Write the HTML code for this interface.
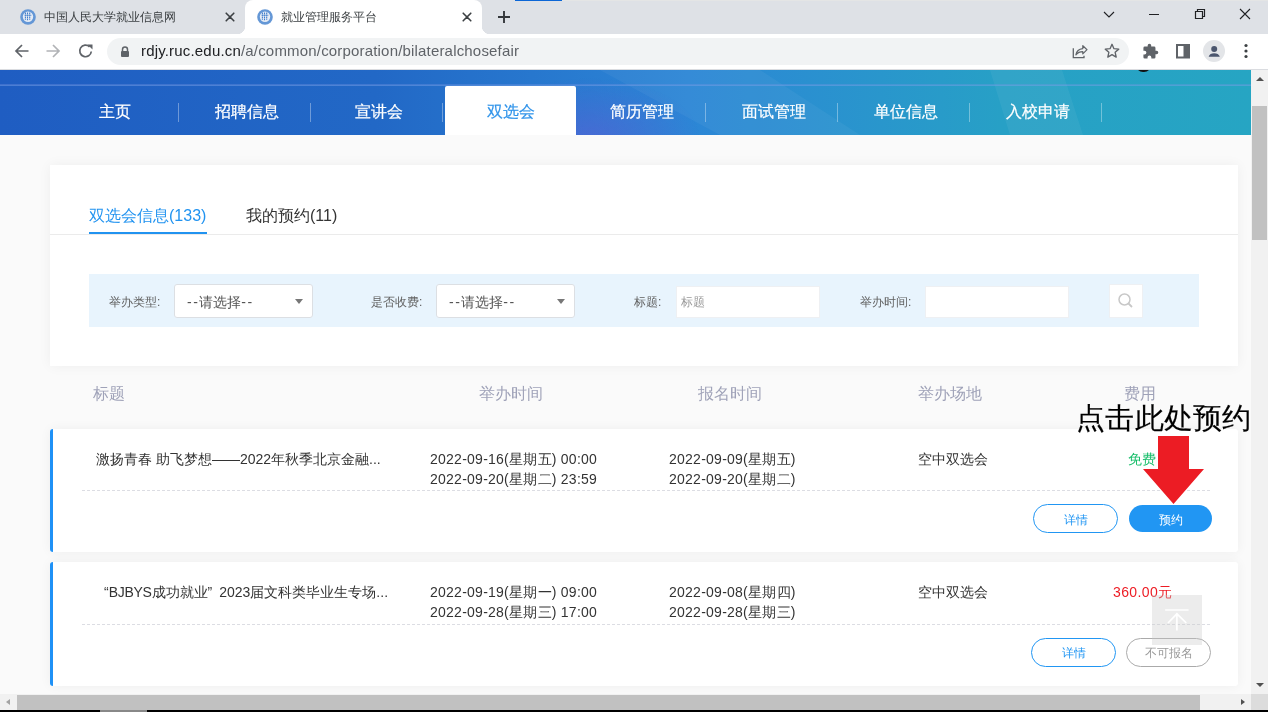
<!DOCTYPE html>
<html><head><meta charset="utf-8">
<style>
*{margin:0;padding:0;box-sizing:border-box}
html,body{width:1268px;height:712px;overflow:hidden;background:#fff;font-family:"Liberation Sans",sans-serif}
.a{position:absolute;white-space:nowrap}
#tabs{position:absolute;left:0;top:0;width:1268px;height:34px;background:#dee1e6}
#tb{position:absolute;left:0;top:34px;width:1268px;height:36px;background:#fff;border-bottom:1px solid #dadce0}
#omni{position:absolute;left:107px;top:38px;width:1022px;height:27px;border-radius:13.5px;background:#f1f3f4}
#page{position:absolute;left:0;top:70px;width:1251px;height:624px;background:#fafafa;overflow:hidden}
#hdr{position:absolute;left:0;top:0;width:1251px;height:65px;background:linear-gradient(90deg,#1f5dc2 0%,#2268c6 30%,#2c86d6 55%,#27a0c6 80%,#26a5c3 100%)}
.nav{position:absolute;top:16px;height:49px;width:132px;color:#fff;font-size:16px;line-height:52px;-webkit-text-stroke:.2px currentColor;text-align:center}
.sep{position:absolute;top:33px;width:1px;height:19px;background:rgba(255,255,255,.35)}
.card{position:absolute;background:#fff;box-shadow:0 0 12px rgba(0,0,0,.05)}
.lbl{position:absolute;font-size:12px;color:#606060;line-height:14px}
.sel{position:absolute;height:34px;background:#fff;border:1px solid #dcdfe3;border-radius:3px;font-size:14px;color:#555;line-height:34px;padding-left:12px}
.inp{position:absolute;height:32px;background:#fff;border:1px solid #eef0f3;font-size:12px;color:#999;line-height:30px;padding-left:4px}
.th{position:absolute;top:314px;font-size:16px;color:#9fa2b8;line-height:20px}
.row{position:absolute;left:50px;width:1188px;height:124px;background:#fff;border-left:3px solid #1f91f6;border-radius:3px;box-shadow:0 0 12px rgba(0,0,0,.05)}
.t14{position:absolute;font-size:14px;color:#333;line-height:20px}
.dash{position:absolute;left:29px;width:1130px;height:1px;background:repeating-linear-gradient(90deg,#dcdde3 0 3px,transparent 3px 5px)}
.btn{position:absolute;height:29px;width:85px;border-radius:15px;font-size:12px;text-align:center;line-height:29px;padding-top:1px}
.t14,.th,.nav,.lbl,.sel,.inp,.btn,div.a{will-change:transform}
</style></head><body>
<!-- Tab strip -->
<div id="tabs">
  <div class="a" style="left:515px;top:0;width:47px;height:1px;background:#0b66d6"></div><div class="a" style="left:562px;top:0;width:706px;height:1px;background:#e4e5e5"></div>
  <!-- active tab -->
  <div class="a" style="left:245px;top:0;width:237px;height:34px;background:#fff;border-radius:8px 8px 0 0"></div>
  <div class="a" style="left:237px;top:26px;width:8px;height:8px;background:radial-gradient(circle at 0 0,#dee1e6 8px,#fff 8.5px)"></div>
  <div class="a" style="left:482px;top:26px;width:8px;height:8px;background:radial-gradient(circle at 100% 0,#dee1e6 8px,#fff 8.5px)"></div>
  <!-- favicons -->
  <svg class="a" style="left:20px;top:9px" width="16" height="16" viewBox="0 0 16 16"><circle cx="8" cy="8" r="7.8" fill="#6497d6"/><circle cx="8" cy="7.8" r="5.2" fill="#e6ecf5"/><path d="M5.4 3.6v7.4M7.5 3.4v7.8M9.7 3.6v7.4" stroke="#3f7ccb" stroke-width="1.1" stroke-dasharray="1.6 .6"/><path d="M4.6 6.3h6.8" stroke="#5b8fd2" stroke-width=".8"/></svg>
  <div class="a" style="left:44px;top:9px;font-size:12px;color:#3c4043;line-height:16px">中国人民大学就业信息网</div>
  <svg class="a" style="left:224px;top:11px" width="12" height="12" viewBox="0 0 12 12"><path d="M2.2 2.2L9.8 9.8M9.8 2.2L2.2 9.8" stroke="#3c4043" stroke-width="1.6" stroke-linecap="round"/></svg>
  <svg class="a" style="left:257px;top:9px" width="16" height="16" viewBox="0 0 16 16"><circle cx="8" cy="8" r="7.8" fill="#6497d6"/><circle cx="8" cy="7.8" r="5.2" fill="#e6ecf5"/><path d="M5.4 3.6v7.4M7.5 3.4v7.8M9.7 3.6v7.4" stroke="#3f7ccb" stroke-width="1.1" stroke-dasharray="1.6 .6"/><path d="M4.6 6.3h6.8" stroke="#5b8fd2" stroke-width=".8"/></svg>
  <div class="a" style="left:281px;top:9px;font-size:12px;color:#3c4043;line-height:16px">就业管理服务平台</div>
  <svg class="a" style="left:461px;top:11px" width="12" height="12" viewBox="0 0 12 12"><path d="M2.2 2.2L9.8 9.8M9.8 2.2L2.2 9.8" stroke="#3c4043" stroke-width="1.6" stroke-linecap="round"/></svg>
  <svg class="a" style="left:496px;top:9px" width="16" height="16" viewBox="0 0 16 16"><path d="M8 2v12M2 8h12" stroke="#35383c" stroke-width="1.9"/></svg>
  <!-- window controls -->
  <svg class="a" style="left:1101px;top:6px" width="16" height="16" viewBox="0 0 16 16"><path d="M3 6l5 5 5-5" fill="none" stroke="#202124" stroke-width="1.1"/></svg>
  <svg class="a" style="left:1146px;top:7px" width="16" height="16" viewBox="0 0 16 16"><path d="M3 7.5h10" stroke="#202124" stroke-width="1"/></svg>
  <svg class="a" style="left:1192px;top:6px" width="16" height="16" viewBox="0 0 16 16"><path d="M3.5 5.5h7v7h-7z M5.5 5.5v-2h7v7h-2" fill="none" stroke="#202124" stroke-width="1.2"/></svg>
  <svg class="a" style="left:1237px;top:6px" width="16" height="16" viewBox="0 0 16 16"><path d="M3 3l10 10M13 3L3 13" stroke="#202124" stroke-width="1.1"/></svg>
</div>
<!-- Toolbar -->
<div id="tb">
  <svg class="a" style="left:12px;top:7px" width="20" height="20" viewBox="0 0 20 20"><path d="M16.5 10H4M10 4l-6 6 6 6" fill="none" stroke="#5f6368" stroke-width="1.7"/></svg>
  <svg class="a" style="left:43px;top:7px" width="20" height="20" viewBox="0 0 20 20"><path d="M3.5 10H16M10 4l6 6-6 6" fill="none" stroke="#b1b3b6" stroke-width="1.7"/></svg>
  <svg class="a" style="left:76px;top:7px" width="20" height="20" viewBox="0 0 20 20"><path d="M15.3 10.5A5.8 5.8 0 1 1 13.6 5.8" fill="none" stroke="#5f6368" stroke-width="1.7"/><path d="M11.5 3.5h5v5z" fill="#5f6368"/></svg>
</div>
<div id="omni"></div>
<svg class="a" style="left:119px;top:45px" width="12" height="14" viewBox="0 0 12 14"><path d="M3.5 6.5V4.5a2.5 2.5 0 0 1 5 0V6.5" fill="none" stroke="#5f6368" stroke-width="1.5"/><rect x="2" y="6" width="8" height="6" rx="1" fill="#5f6368"/></svg>
<div class="a" style="left:141px;top:42px;font-size:15px;line-height:18px;color:#202124;letter-spacing:.18px">rdjy.ruc.edu.cn<span style="color:#5f6368">/a/common/corporation/bilateralchosefair</span></div>
<!-- right toolbar icons -->
<svg class="a" style="left:1070px;top:43px" width="20" height="18" viewBox="0 0 20 18"><path d="M3.3 5.2V14.7H14V12.8" fill="none" stroke="#5f6368" stroke-width="1.3"/><path d="M5.9 11.8C6.5 8 9 6 12.8 5.6V2.6L17 6.7L12.8 10.9V8.6C9.5 8.6 7.5 9.8 5.9 11.8Z" fill="none" stroke="#5f6368" stroke-width="1.2" stroke-linejoin="round"/></svg>
<svg class="a" style="left:1103px;top:42px" width="18" height="18" viewBox="0 0 24 24"><path d="M12 3l2.6 5.9 6.4.6-4.8 4.3 1.4 6.3L12 16.8 6.4 20.1l1.4-6.3L3 9.5l6.4-.6z" fill="none" stroke="#5f6368" stroke-width="1.8" stroke-linejoin="round"/></svg>
<svg class="a" style="left:1142px;top:43px" width="17" height="17" viewBox="0 0 24 24"><path d="M20.5 11H19V7a2 2 0 0 0-2-2h-4V3.5a2.5 2.5 0 0 0-5 0V5H4a2 2 0 0 0-2 2v3.8h1.5a2.7 2.7 0 0 1 0 5.4H2V20a2 2 0 0 0 2 2h3.8v-1.5a2.7 2.7 0 0 1 5.4 0V22H17a2 2 0 0 0 2-2v-4h1.5a2.5 2.5 0 0 0 0-5z" fill="#5f6368"/></svg>
<svg class="a" style="left:1175px;top:43px" width="16" height="16" viewBox="0 0 16 16"><rect x="2" y="2" width="12" height="12.5" fill="none" stroke="#5f6368" stroke-width="2"/><rect x="8.5" y="2" width="5.5" height="12.5" fill="#5f6368"/></svg>
<svg class="a" style="left:1203px;top:40px" width="22" height="22" viewBox="0 0 22 22"><circle cx="11" cy="11" r="11" fill="#e3e5e8"/><circle cx="11.2" cy="9" r="3" fill="#4b566e"/><path d="M5.6 16.8c.6-2.6 3-3.6 5.6-3.6s5 1 5.6 3.6z" fill="#4b566e"/></svg>
<svg class="a" style="left:1238px;top:43px" width="16" height="16" viewBox="0 0 16 16"><circle cx="8" cy="2.5" r="1.6" fill="#3c4043"/><circle cx="8" cy="8" r="1.6" fill="#3c4043"/><circle cx="8" cy="13.5" r="1.6" fill="#3c4043"/></svg>

<!-- PAGE -->
<div id="page">
  <div id="hdr">
    <div class="a" style="left:0;top:0;width:1251px;height:65px;background:radial-gradient(ellipse 110px 60px at 590px 68px,rgba(100,90,215,.5),rgba(100,90,215,0))"></div>
    <div class="a" style="left:0;top:0;width:1251px;height:65px;background:rgba(255,255,255,.045);clip-path:polygon(600px 0,760px 0,860px 65px,720px 65px)"></div>
    <div class="a" style="left:0;top:0;width:1251px;height:65px;background:rgba(255,255,255,.05);clip-path:polygon(990px 0,1062px 0,1083px 65px,1010px 65px)"></div>
    <div class="a" style="left:0;top:14px;width:1251px;height:1px;background:rgba(120,150,225,.35)"></div><div class="a" style="left:0;top:15px;width:1251px;height:1px;background:rgba(120,160,230,.5)"></div>
    <div class="a" style="left:1136px;top:-5px;width:15px;height:7px;border-radius:0 0 8px 8px;background:#111"></div>
    <div class="nav" style="left:49px">主页</div><div class="sep" style="left:178px"></div>
    <div class="nav" style="left:181px">招聘信息</div><div class="sep" style="left:310px"></div>
    <div class="nav" style="left:313px">宣讲会</div><div class="sep" style="left:442px"></div>
    <div class="nav" style="left:445px;width:131px;background:#fff;color:#2f93ea;border-radius:2px 2px 0 0">双选会</div>
    <div class="nav" style="left:576px">简历管理</div><div class="sep" style="left:705px"></div>
    <div class="nav" style="left:708px">面试管理</div><div class="sep" style="left:837px"></div>
    <div class="nav" style="left:840px">单位信息</div><div class="sep" style="left:969px"></div>
    <div class="nav" style="left:972px">入校申请</div><div class="sep" style="left:1101px"></div>
  </div>

  <!-- filter card -->
  <div class="card" style="left:50px;top:95px;width:1188px;height:201px">
    <div class="a" style="left:39px;top:40px;font-size:16px;line-height:22px;color:#2193f0">双选会信息(133)</div>
    <div class="a" style="left:39px;top:67px;width:118px;height:2px;background:#2193f0"></div>
    <div class="a" style="left:196px;top:40px;font-size:16px;line-height:22px;color:#333">我的预约(11)</div>
    <div class="a" style="left:0;top:69px;width:1188px;height:1px;background:#ebebeb"></div>
    <div class="a" style="left:39px;top:109px;width:1110px;height:53px;background:#e8f4fd">
      <div class="lbl" style="left:20px;top:21px">举办类型:</div>
      <div class="sel" style="left:85px;top:10px;width:139px"><span style="letter-spacing:1.5px">--</span>请选择<span style="letter-spacing:1.5px">--</span><span class="a" style="left:120px;top:14px;width:0;height:0;border-left:4.5px solid transparent;border-right:4.5px solid transparent;border-top:5px solid #777"></span></div>
      <div class="lbl" style="left:282px;top:21px">是否收费:</div>
      <div class="sel" style="left:347px;top:10px;width:139px"><span style="letter-spacing:1.5px">--</span>请选择<span style="letter-spacing:1.5px">--</span><span class="a" style="left:120px;top:14px;width:0;height:0;border-left:4.5px solid transparent;border-right:4.5px solid transparent;border-top:5px solid #777"></span></div>
      <div class="lbl" style="left:545px;top:21px">标题:</div>
      <div class="inp" style="left:587px;top:12px;width:144px">标题</div>
      <div class="lbl" style="left:771px;top:21px">举办时间:</div>
      <div class="inp" style="left:836px;top:12px;width:144px"></div>
      <div class="a" style="left:1020px;top:10px;width:34px;height:34px;background:#fff;border:1px solid #eef0f3">
        <svg class="a" style="left:7px;top:7px" width="18" height="18" viewBox="0 0 18 18"><circle cx="7.5" cy="7.5" r="5.5" fill="none" stroke="#c8c8c8" stroke-width="1.5"/><path d="M11.5 11.5l3.5 3.5" stroke="#c8c8c8" stroke-width="1.8"/></svg>
      </div>
    </div>
  </div>

  <!-- table header -->
  <div class="th" style="left:93px">标题</div>
  <div class="th" style="left:479px">举办时间</div>
  <div class="th" style="left:698px">报名时间</div>
  <div class="th" style="left:918px">举办场地</div>
  <div class="th" style="left:1124px">费用</div>

  <!-- row 1 -->
  <div class="row" style="top:359px;height:123px">
    <div class="t14" style="left:43px;top:20px">激扬青春 助飞梦想——2022年秋季北京金融...</div>
    <div class="t14" style="letter-spacing:.25px;left:377px;top:20px">2022-09-16(星期五) 00:00<br>2022-09-20(星期二) 23:59</div>
    <div class="t14" style="letter-spacing:.25px;left:616px;top:20px">2022-09-09(星期五)<br>2022-09-20(星期二)</div>
    <div class="t14" style="left:865px;top:20px">空中双选会</div>
    <div class="t14" style="left:1075px;top:20px;color:#19be6b">免费</div>
    <div class="dash" style="top:61px"></div>
    <div class="btn" style="left:980px;top:75px;border:1px solid #2196f3;color:#2196f3">详情</div>
    <div class="btn" style="left:1076px;top:76px;width:83px;height:27px;line-height:28px;background:#2196f3;color:#fff">预约</div>
  </div>

  <!-- row 2 -->
  <div class="row" style="top:492px">
    <div class="t14" style="left:51px;top:20px">“<span style="letter-spacing:-.3px">BJBYS</span>成功就业”<span style="margin-left:7px">2023届文科类毕业生专场...</span></div>
    <div class="t14" style="letter-spacing:.25px;left:377px;top:20px">2022-09-19(星期一) 09:00<br>2022-09-28(星期三) 17:00</div>
    <div class="t14" style="letter-spacing:.25px;left:616px;top:20px">2022-09-08(星期四)<br>2022-09-28(星期三)</div>
    <div class="t14" style="left:865px;top:20px">空中双选会</div>
    <div class="t14" style="left:1060px;top:20px;color:#ed1c24;letter-spacing:.4px">360.00元</div>
    <div class="dash" style="top:62px"></div>
    <div class="btn" style="left:978px;top:76px;padding-top:0;border:1px solid #2196f3;color:#2196f3">详情</div>
    <div class="btn" style="left:1073px;top:76px;padding-top:0;border:1px solid #aaa;color:#999">不可报名</div>
  </div>

  <!-- back to top -->
  <div class="a" style="left:1152px;top:525px;width:50px;height:50px;background:rgba(200,200,200,.35)">
    <svg class="a" style="left:0;top:0" width="50" height="50" viewBox="0 0 50 50"><path d="M13.2 15h23.4M24.9 19v16.5M16 28l8.9-9.2 9.4 9.2" fill="none" stroke="#fff" stroke-width="1.7"/></svg>
  </div>

  <!-- annotation -->
  <div class="a" style="left:1076px;top:330px;font-size:29px;line-height:36px;color:#000;-webkit-text-stroke:.15px #000;letter-spacing:.3px">点击此处预约</div>
  <svg class="a" style="left:1140px;top:366px" width="66" height="70" viewBox="0 0 66 70"><path d="M18 0h31v33h15L33.5 68 3 33h15z" fill="#ec1c24"/></svg>
</div>

<!-- vertical scrollbar -->
<div class="a" style="left:1251px;top:70px;width:17px;height:624px;background:#f1f1f1"></div>
<div class="a" style="left:1252px;top:106px;width:15px;height:134px;background:#c1c1c1"></div>
<div class="a" style="left:1256px;top:77px;width:0;height:0;border-left:4px solid transparent;border-right:4px solid transparent;border-bottom:4px solid #505050"></div>
<div class="a" style="left:1256px;top:683px;width:0;height:0;border-left:4px solid transparent;border-right:4px solid transparent;border-top:4px solid #505050"></div>
<!-- horizontal scrollbar -->
<div class="a" style="left:0;top:694px;width:1251px;height:16px;background:#f1f1f1"></div>
<div class="a" style="left:17px;top:695px;width:1183px;height:15px;background:#c1c1c1"></div>
<div class="a" style="left:6px;top:699px;width:0;height:0;border-top:3.5px solid transparent;border-bottom:3.5px solid transparent;border-right:4px solid #a3a3a3"></div>
<div class="a" style="left:1241px;top:699px;width:0;height:0;border-top:3.5px solid transparent;border-bottom:3.5px solid transparent;border-left:4px solid #505050"></div>
<div class="a" style="left:1251px;top:694px;width:17px;height:16px;background:#dcdcdc"></div>
<div class="a" style="left:0;top:710px;width:1268px;height:2px;background:#000"></div>
<div class="a" style="left:100px;top:710px;width:47px;height:2px;background:#888"></div>
</body></html>
